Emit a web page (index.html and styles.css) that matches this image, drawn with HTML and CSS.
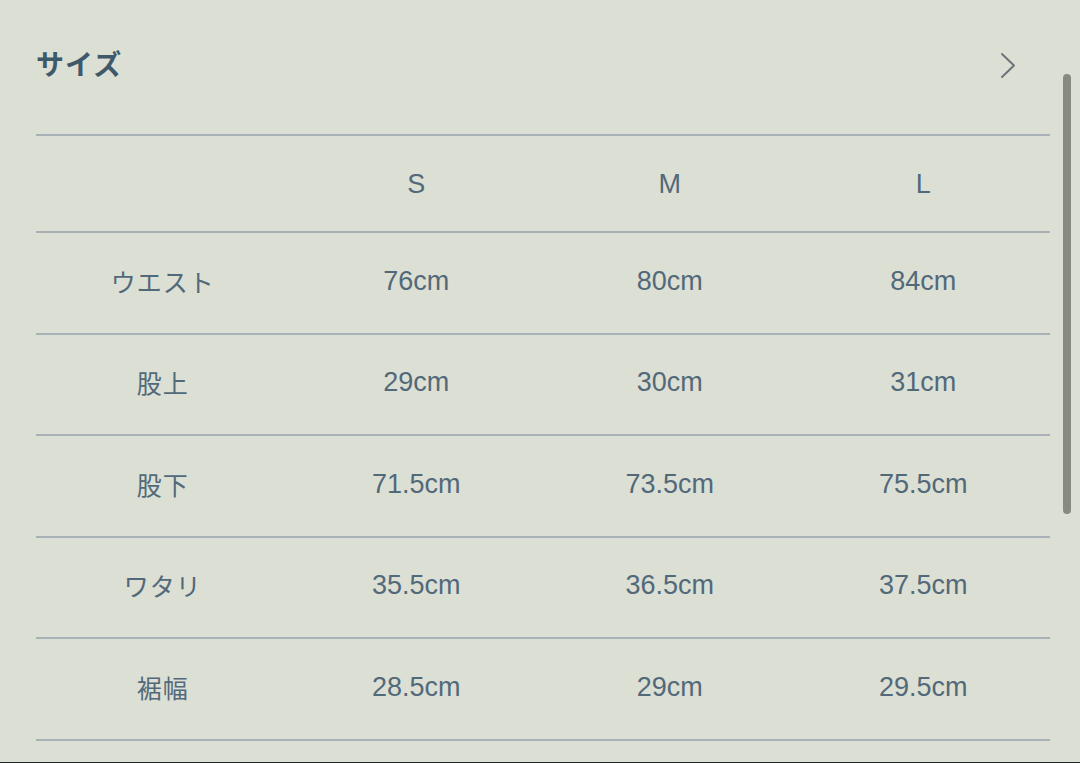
FILE: index.html
```html
<!DOCTYPE html>
<html lang="ja">
<head>
<meta charset="utf-8">
<link rel="stylesheet" href="styles.css">
</head>
<body>
<div class="page">
  <div class="header">
    <h2 class="title">サイズ</h2>
    <svg class="chevron" width="16" height="28" viewBox="0 0 16 28"><polyline points="2,2 14,13.5 2,25" fill="none" stroke="#6b7479" stroke-width="2" stroke-linecap="round" stroke-linejoin="round"/></svg>
  </div>
  <div class="table">
    <div class="row head"><div></div><div>S</div><div>M</div><div>L</div></div>
    <div class="row"><div>ウエスト</div><div>76cm</div><div>80cm</div><div>84cm</div></div>
    <div class="row"><div>股上</div><div>29cm</div><div>30cm</div><div>31cm</div></div>
    <div class="row"><div>股下</div><div>71.5cm</div><div>73.5cm</div><div>75.5cm</div></div>
    <div class="row"><div>ワタリ</div><div>35.5cm</div><div>36.5cm</div><div>37.5cm</div></div>
    <div class="row"><div>裾幅</div><div>28.5cm</div><div>29cm</div><div>29.5cm</div></div>
    <div class="end"></div>
  </div>
  <div class="scrollbar"></div>
</div>
</body>
</html>
```
FILE: styles.css
```css
html, body {
  margin: 0;
  padding: 0;
  background: #dcdfd4;
}
.page {
  position: relative;
  height: 762px;
  border-bottom: 1px solid #23272a;
  overflow: hidden;
  font-family: "Liberation Sans", "Noto Sans CJK JP", sans-serif;
  color: #52697a;
}
.header {
  height: 134px;
  display: flex;
  align-items: flex-start;
  justify-content: space-between;
  padding: 0 64px 0 36px;
  box-sizing: border-box;
}
.title {
  margin: 43px 0 0 0;
  font-family: "Noto Sans CJK JP", sans-serif;
  font-size: 28px;
  font-weight: 700;
  line-height: 40px;
  color: #3e5969;
  letter-spacing: 1px;
}
.chevron {
  margin-top: 52px;
}
.table {
  margin: 0 30px 0 36px;
}
.row {
  display: grid;
  grid-template-columns: repeat(4, 1fr);
  align-items: center;
  height: 101.5px;
  border-top: 2px solid #a8b1b5;
  box-sizing: border-box;
  font-size: 27px;
}
.row > div {
  text-align: center;
  line-height: 30px;
  padding-bottom: 4px;
}
.row.head {
  height: 97px;
}
.row.head > div {
  padding-bottom: 0;
}
.row > div:first-child {
  font-family: "Noto Sans CJK JP", sans-serif;
  font-size: 25px;
  letter-spacing: 1px;
}
.end {
  border-top: 2px solid #a8b1b5;
}
.scrollbar {
  position: absolute;
  left: 1063px;
  top: 74px;
  width: 8px;
  height: 440px;
  border-radius: 4px;
  background: #858b81;
}
```
